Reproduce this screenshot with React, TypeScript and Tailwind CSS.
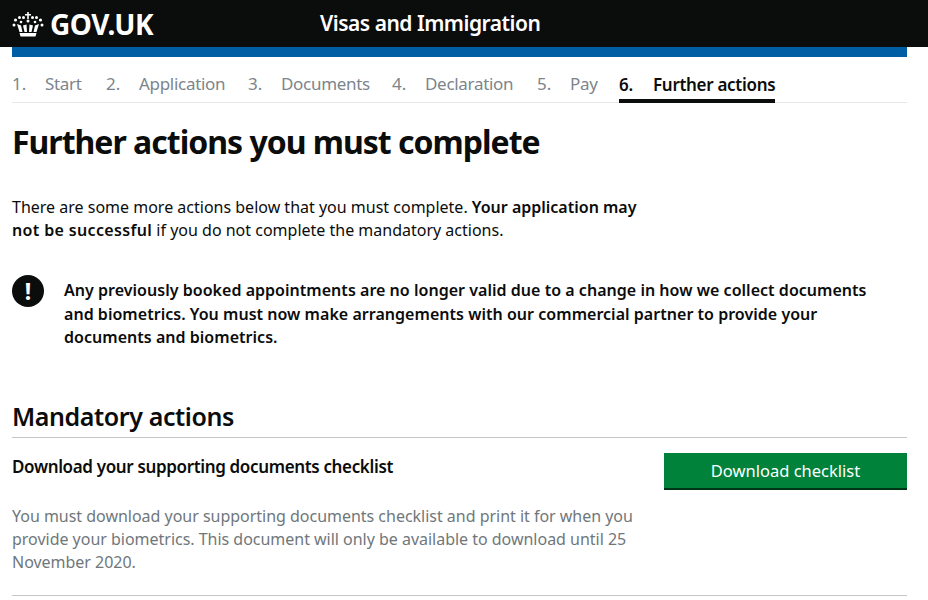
const FONT = "font-['Noto_Sans','Liberation_Sans',sans-serif]";

const steps = [
  { num: "1.", label: "Start", width: "w-[38px]", gap: "mr-[23px]" },
  { num: "2.", label: "Application", width: "w-[86px]", gap: "mr-[23px]" },
  { num: "3.", label: "Documents", width: "w-[88px]", gap: "mr-[23px]" },
  { num: "4.", label: "Declaration", width: "w-[89px]", gap: "mr-[23px]" },
  { num: "5.", label: "Pay", width: "w-[27px]", gap: "mr-[22px]" },
];

function Crown() {
  return (
    <svg width="32" height="26" viewBox="0 0 32 26" fill="white" aria-hidden="true">
      <path d="M15.200 1h1.600v2h2.200v1.600h-2.200V8h-1.600V4.600H13V3h2.200z" />
      <circle cx="16" cy="10" r="1.500" />
      <circle cx="11.500" cy="6.500" r="1.500" />
      <circle cx="20.500" cy="6.500" r="1.500" />
      <circle cx="7.500" cy="6.500" r="1.500" />
      <circle cx="24.500" cy="6.500" r="1.500" />
      <circle cx="3.500" cy="9" r="1.600" />
      <circle cx="28.500" cy="9" r="1.600" />
      <circle cx="2" cy="14" r="1.500" />
      <circle cx="30" cy="14" r="1.500" />
      <circle cx="9" cy="11" r="1.300" />
      <circle cx="23" cy="11" r="1.300" />
      <path d="M5 13l2.500 8h3L9 14.500zM11 14.500l1.500 6.500h2.500l-.5-7.500zM27 13l-2.500 8h-3L23 14.500zM21 14.500L19.500 21H17l.5-7.500z" />
      <path d="M7.500 22h17l-1 3.500h-15z" />
    </svg>
  );
}

export default function App() {
  return (
    <div className={`${FONT} h-[600px] w-[928px] overflow-hidden bg-white text-[#0b0c0c]`}>
      <header className="flex h-[47px] items-center bg-[#0b0c0c] pl-[12px] text-white">
        <Crown />
        <span className="ml-[6px] w-[270px] text-[28px] font-bold leading-none tracking-[-0.5px]">GOV.UK</span>
        <span className="text-[21px] font-semibold leading-none tracking-[-0.5px]">Visas and Immigration</span>
      </header>

      <div className="mx-[12px] mr-[21px]">
        <div className="h-[10px] bg-[#005ea5]" />

        <nav className="flex h-[46px] items-end border-b border-[#e8e8e8] text-[17px] leading-[23px]">
          {steps.map((step) => (
            <div key={step.label} className={`${step.gap} flex pb-[7px] text-[#7c858c]`}>
              <span className="w-[33px]">{step.num}</span>
              <span className={`${step.width} whitespace-nowrap tracking-[-0.3px]`}>{step.label}</span>
            </div>
          ))}
          <div className="-mb-px flex border-b-[4px] border-[#0b0c0c] pb-[3px] font-semibold tracking-[-0.3px]">
            <span className="w-[34px]">6.</span>
            <span>Further actions</span>
          </div>
        </nav>

        <h1 className="mt-[19px] text-[32px] font-bold leading-[40px] tracking-[-1px]">
          Further actions you must complete
        </h1>

        <p className="mt-[34px] text-[16px] leading-[23px]">
          <span className="block">
            There are some more actions below that you must complete.{" "}
            <strong className="font-semibold">Your application may</strong>
          </span>
          <span className="block">
            <strong className="font-semibold tracking-[0.35px]">not be successful</strong> if you do not complete the mandatory actions.
          </span>
        </p>

        <div className="mt-[33px] flex">
          <div className="flex h-[32px] w-[32px] shrink-0 items-center justify-center rounded-full bg-[#0b0c0c] text-[23px] font-bold leading-none text-white">
            !
          </div>
          <p className="ml-[20px] mt-[4px] w-[830px] text-[16px] font-semibold leading-[23.500px] tracking-[0.03px]">
            Any previously booked appointments are no longer valid due to a change in how we collect documents and biometrics. You must now make arrangements with our commercial partner to provide your documents and biometrics.
          </p>
        </div>

        <h2 className="mt-[48px] border-b border-[#c4c6c8] pb-[3px] text-[25px] font-semibold leading-[36px] tracking-[-0.4px]">
          Mandatory actions
        </h2>

        <section className="flex justify-between border-b border-[#c4c6c8] pb-[21px] pt-[14px]">
          <div className="w-[630px]">
            <h3 className="text-[17px] font-semibold leading-[30px] tracking-[-0.35px]">
              Download your supporting documents checklist
            </h3>
            <p className="mt-[23px] text-[16px] leading-[23px] tracking-[-0.02px] text-[#6f777b]">
              You must download your supporting documents checklist and print it for when you provide your biometrics. This document will only be available to download until 25 November 2020.
            </p>
          </div>
          <button
            type="button"
            className="mt-px h-[37px] w-[243px] border-b-[2px] border-[#003618] bg-[#00823b] pt-[3px] text-[16.500px] text-white"
          >
            Download checklist
          </button>
        </section>
      </div>
    </div>
  );
}
